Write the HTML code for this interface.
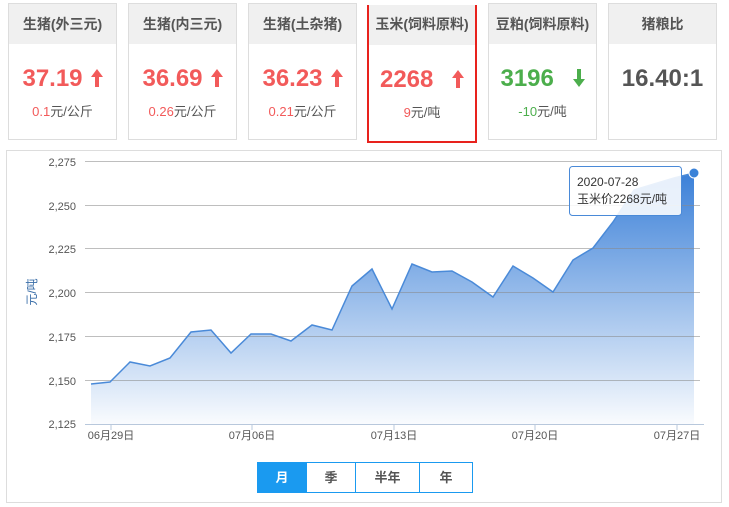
<!DOCTYPE html>
<html><head><meta charset="utf-8"><style>
body{margin:0;width:729px;height:507px;background:#fff;font-family:"Liberation Sans","Noto Sans CJK SC",sans-serif;position:relative;overflow:hidden}
.card{position:absolute;top:3px;width:107px;height:135px;border:1px solid #ddd;background:#fff;text-align:center}
.card .h{height:40px;background:#f0f0f0;line-height:40px;font-size:14px;font-weight:bold;color:#555}
.card .v{margin-top:21px;font-size:24px;font-weight:bold;line-height:28px}
.card .s{margin-top:8px;font-size:13px;color:#555}
.red{color:#f25a5a}.grn{color:#4cae4c}
.arr{display:inline-block;margin-left:8px;vertical-align:-1px}
.sel{border:2px solid #e8221d;top:5px;height:134px;width:106px}
.btns{position:absolute;left:257px;top:462px;height:29px;border:1px solid #1a9af0;display:flex;font-size:13px;font-weight:bold;color:#555}
.btns div{border-left:1px solid #1a9af0;line-height:29px;text-align:center}
</style></head><body>
<div class="card" style="left:8px"><div class="h">生猪(外三元)</div><div class="v red">37.19<svg class="arr" width="12" height="18"><path d="M6 0 L12 8 L8 8 L8 18 L4 18 L4 8 L0 8 Z" fill="#f25a5a"/></svg></div><div class="s"><span class="red">0.1</span>元/公斤</div></div>
<div class="card" style="left:128px"><div class="h">生猪(内三元)</div><div class="v red">36.69<svg class="arr" width="12" height="18"><path d="M6 0 L12 8 L8 8 L8 18 L4 18 L4 8 L0 8 Z" fill="#f25a5a"/></svg></div><div class="s"><span class="red">0.26</span>元/公斤</div></div>
<div class="card" style="left:248px"><div class="h">生猪(土杂猪)</div><div class="v red">36.23<svg class="arr" width="12" height="18"><path d="M6 0 L12 8 L8 8 L8 18 L4 18 L4 8 L0 8 Z" fill="#f25a5a"/></svg></div><div class="s"><span class="red">0.21</span>元/公斤</div></div>
<div class="card sel" style="left:367px"><div class="h" style="margin-top:-2px;height:40px;line-height:38px">玉米(饲料原料)</div><div class="v red" style="margin-top:21px">2268 <svg class="arr" style="margin-left:12px" width="12" height="18"><path d="M6 0 L12 8 L8 8 L8 18 L4 18 L4 8 L0 8 Z" fill="#f25a5a"/></svg></div><div class="s"><span class="red">9</span>元/吨</div></div>
<div class="card" style="left:488px"><div class="h">豆粕(饲料原料)</div><div class="v grn">3196 <svg class="arr" style="margin-left:12px" width="12" height="18"><path d="M6 18 L12 10 L8 10 L8 0 L4 0 L4 10 L0 10 Z" fill="#4cae4c"/></svg></div><div class="s"><span class="grn">-10</span>元/吨</div></div>
<div class="card" style="left:608px"><div class="h">猪粮比</div><div class="v" style="color:#555">16.40:1</div></div>

<svg style="position:absolute;left:0;top:0" width="729" height="507">
<defs><linearGradient id="g" x1="0" y1="0" x2="0" y2="1"><stop offset="0" stop-color="#3b80d8"/><stop offset="1" stop-color="#3b80d8" stop-opacity="0.03"/></linearGradient></defs>
<rect x="6.5" y="150.5" width="715" height="352" fill="none" stroke="#ddd"/>
<polygon fill="url(#g)" points="91,384 110,382 130,362 150,366 170,358 191,332 211,330 231,353 251,334 271,334 291,341 312,325 332,330 352,286 372,269 392,309 412,264 432,272 452,271 472,282 493,297 513,266 533,278 553,292 573,260 593,248 613,222 634,190 654,184 674,178 694,173 694,424 91,424"/>
<g stroke="#888" stroke-opacity="0.55" stroke-width="1">
<line x1="85" y1="161.5" x2="700" y2="161.5"/><line x1="85" y1="205.5" x2="700" y2="205.5"/><line x1="85" y1="248.5" x2="700" y2="248.5"/><line x1="85" y1="292.5" x2="700" y2="292.5"/><line x1="85" y1="336.5" x2="700" y2="336.5"/><line x1="85" y1="380.5" x2="700" y2="380.5"/>
</g>
<line x1="85" y1="424.5" x2="704" y2="424.5" stroke="#b8c8dc"/>
<g stroke="#b8c8dc"><line x1="111" y1="424" x2="111" y2="430"/><line x1="252" y1="424" x2="252" y2="430"/><line x1="394" y1="424" x2="394" y2="430"/><line x1="535" y1="424" x2="535" y2="430"/><line x1="677" y1="424" x2="677" y2="430"/></g>
<polyline fill="none" stroke="#4a8ad8" stroke-width="1.5" points="91,384 110,382 130,362 150,366 170,358 191,332 211,330 231,353 251,334 271,334 291,341 312,325 332,330 352,286 372,269 392,309 412,264 432,272 452,271 472,282 493,297 513,266 533,278 553,292 573,260 593,248 613,222 634,190 654,184 674,178 694,173"/>
<circle cx="694" cy="173" r="5" fill="#3a82d8" stroke="#fff" stroke-width="1"/>
<g font-size="11" fill="#555" text-anchor="end"><text x="76" y="166">2,275</text><text x="76" y="210">2,250</text><text x="76" y="253">2,225</text><text x="76" y="297">2,200</text><text x="76" y="341">2,175</text><text x="76" y="385">2,150</text><text x="76" y="428">2,125</text></g>
<g font-size="11" fill="#555" text-anchor="middle"><text x="111" y="439">06月29日</text><text x="252" y="439">07月06日</text><text x="394" y="439">07月13日</text><text x="535" y="439">07月20日</text><text x="677" y="439">07月27日</text></g>
<text transform="translate(36,292) rotate(-90)" font-size="12" fill="#3a6ea8" text-anchor="middle">元/吨</text>
<rect x="569.5" y="166.5" width="112" height="49" rx="3" fill="#fff" fill-opacity="0.88" stroke="#4a8ad8"/>
<text x="577" y="186" font-size="12" fill="#333">2020-07-28</text>
<text x="577" y="203" font-size="12" fill="#333">玉米价2268元/吨</text>
</svg>
<div class="btns"><div style="width:48px;border:0;background:#1a9af0;color:#fff">月</div><div style="width:48px">季</div><div style="width:63px">半年</div><div style="width:52px">年</div></div>
</body></html>
